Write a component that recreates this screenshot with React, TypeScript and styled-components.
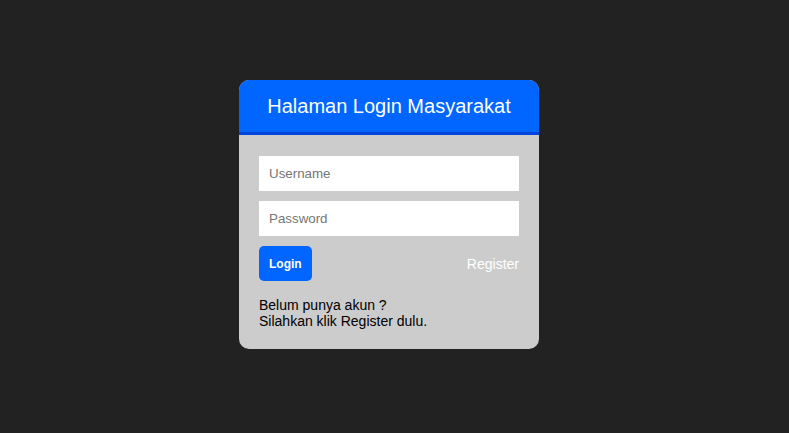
import React from "react";
import styled, { createGlobalStyle } from "styled-components";

const Global = createGlobalStyle`
  html, body { margin: 0; padding: 0; background: #222222; }
  body { font-family: "Liberation Sans", Arial, sans-serif; }
  * { box-sizing: border-box; }
`;

const Page = styled.div`
  min-height: 433px;
  display: flex;
  justify-content: center;
  align-items: flex-start;
  padding: 80px 11px 0 0;
`;

const Card = styled.div`
  width: 300px;
  background: #cccccc;
  border-radius: 10px;
  overflow: hidden;
`;

const Header = styled.div`
  height: 55px;
  background: #0066ff;
  border-bottom: 3px solid #0044dd;
  display: flex;
  align-items: center;
  justify-content: center;
  padding-top: 1px;
`;

const Title = styled.h2`
  margin: 0;
  color: #ffffff;
  font-size: 20px;
  font-weight: normal;
`;

const Body = styled.div`
  padding: 21px 20px 20px;
  display: flex;
  flex-direction: column;
`;

const Input = styled.input`
  height: 35px;
  width: 100%;
  border: none;
  outline: none;
  background: #ffffff;
  padding: 0 10px;
  margin-bottom: 10px;
  font-family: "Liberation Sans", Arial, sans-serif;
  font-size: 13.33px;
  &::placeholder { color: #757575; }
`;

const Actions = styled.div`
  display: flex;
  align-items: center;
  justify-content: space-between;
`;

const Button = styled.button`
  height: 35px;
  padding: 0 10px;
  border: none;
  border-radius: 5px;
  background: #0066ff;
  color: #ffffff;
  font-family: "Liberation Sans", Arial, sans-serif;
  font-weight: bold;
  font-size: 12px;
  cursor: pointer;
`;

const Link = styled.a`
  color: #ffffff;
  font-size: 14px;
  text-decoration: none;
`;

const Note = styled.p`
  margin: 16px 0 0;
  font-size: 14px;
  line-height: 16px;
  color: #000000;
`;

export default function App() {
  return (
    <>
      <Global />
      <Page>
        <Card>
          <Header>
            <Title>Halaman Login Masyarakat</Title>
          </Header>
          <Body>
            <Input placeholder="Username" />
            <Input type="password" placeholder="Password" />
            <Actions>
              <Button>Login</Button>
              <Link href="#">Register</Link>
            </Actions>
            <Note>
              Belum punya akun ?
              <br />
              Silahkan klik Register dulu.
            </Note>
          </Body>
        </Card>
      </Page>
    </>
  );
}
